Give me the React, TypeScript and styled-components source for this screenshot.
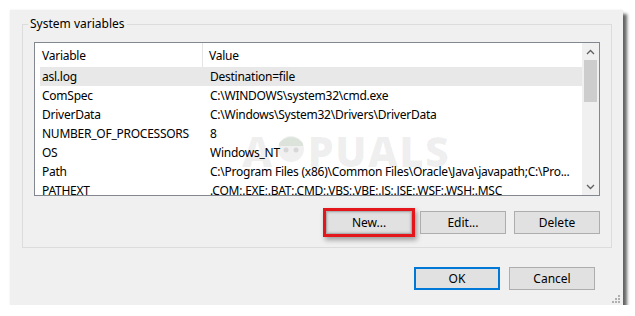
import React from "react";
import styled, { createGlobalStyle } from "styled-components";

const Global = createGlobalStyle`
  html, body { margin: 0; padding: 0; background: #ffffff; }
  body { font-family: "Noto Sans", "Open Sans", sans-serif; font-size: 12px; color: #000; }
  * { box-sizing: border-box; }
`;

const Dialog = styled.div`
  position: relative;
  margin: 10px 0 0 10px;
  width: 613px;
  height: 295px;
  background: #f0f0f0;
  box-shadow: 4px 4px 3px rgba(0, 0, 0, 0.6), 0 0 2px rgba(0, 0, 0, 0.08);
  padding: 7px 11px 0 12px;
  display: flex;
  flex-direction: column;
`;

const Group = styled.fieldset`
  margin: 0;
  min-width: 0;
  border: 1px solid #dcdcdc;
  padding: 11px 11px 13px 11px;
  display: flex;
  flex-direction: column;
`;

const Legend = styled.legend`
  margin-left: -6px;
  padding: 0 2px;
  font-size: 12px;
  line-height: 14px;
  color: #000;
`;

const ListView = styled.div`
  height: 154px;
  border: 1px solid #828790;
  background: #fff;
  display: grid;
  grid-template-columns: 1fr 17px;
  overflow: hidden;
  letter-spacing: -0.25px;
`;

const ListBody = styled.div`
  display: flex;
  flex-direction: column;
  overflow: hidden;
`;

const Header = styled.div`
  display: flex;
  height: 24px;
  flex-shrink: 0;
  align-items: stretch;
`;

const HeaderCell = styled.div<{ $w?: number; $pad: number }>`
  ${(p) => (p.$w ? `width: ${p.$w}px; flex-shrink: 0;` : "flex: 1;")}
  padding-left: ${(p) => p.$pad}px;
  display: flex;
  align-items: center;
  ${(p) => (p.$w ? "border-right: 1px solid #e5e5e5;" : "")}
  white-space: nowrap;
`;

const Row = styled.div<{ $selected?: boolean }>`
  display: flex;
  height: 19px;
  flex-shrink: 0;
  margin-left: 5px;
  align-items: center;
  background: ${(p) => (p.$selected ? "#e8e8e8" : "transparent")};
  white-space: nowrap;
`;

const NameCell = styled.div`
  width: 170px;
  flex-shrink: 0;
  padding-left: 2px;
`;

const ValueCell = styled.div`
  flex: 1;
  overflow: hidden;
`;

const ScrollBar = styled.div`
  background: #f0f0f0;
  display: flex;
  flex-direction: column;
`;

const ScrollButton = styled.div`
  height: 17px;
  display: flex;
  align-items: center;
  justify-content: center;
  flex-shrink: 0;
`;

const Track = styled.div`
  flex: 1;
  padding: 0 2px;
`;

const Thumb = styled.div`
  height: 42px;
  background: #cdcdcd;
`;

const ButtonRow = styled.div<{ $gap: number; $padRight?: number; $top: number }>`
  display: flex;
  justify-content: flex-end;
  gap: ${(p) => p.$gap}px;
  margin-top: ${(p) => p.$top}px;
  padding-right: ${(p) => p.$padRight ?? 0}px;
`;

const Button = styled.button<{ $highlight?: boolean; $default?: boolean }>`
  width: 86px;
  height: 23px;
  margin: 0;
  padding: 0;
  font-family: inherit;
  font-size: 12px;
  color: #000;
  background: #e1e1e1;
  border: ${(p) => (p.$default ? "2px solid #0078d7" : "1px solid #adadad")};
  ${(p) =>
    p.$highlight
      ? "box-shadow: 0 0 0 3px #e3161c, 2px 3px 5px 3px rgba(0,0,0,0.35), inset 0 0 3px rgba(0,0,0,0.25);"
      : ""}
`;

const Watermark = styled.div`
  position: absolute;
  left: 232px;
  top: 112px;
  display: flex;
  align-items: center;
  font-family: "Open Sans", "Noto Sans", sans-serif;
  font-weight: 800;
  font-size: 42px;
  letter-spacing: 1px;
  color: rgba(0, 0, 0, 0.06);
  pointer-events: none;
`;

const Grip = styled.svg`
  position: absolute;
  right: 3px;
  bottom: 2px;
`;

const Chevron = ({ up }: { up?: boolean }) => (
  <svg width="9" height="6" viewBox="0 0 9 6">
    <path
      d={up ? "M1 5 L4.5 1.5 L8 5" : "M1 1 L4.5 4.5 L8 1"}
      fill="none"
      stroke="#606060"
      strokeWidth="1.3"
    />
  </svg>
);

const rows: [string, string][] = [
  ["asl.log", "Destination=file"],
  ["ComSpec", "C:\\WINDOWS\\system32\\cmd.exe"],
  ["DriverData", "C:\\Windows\\System32\\Drivers\\DriverData"],
  ["NUMBER_OF_PROCESSORS", "8"],
  ["OS", "Windows_NT"],
  ["Path", "C:\\Program Files (x86)\\Common Files\\Oracle\\Java\\javapath;C:\\Pro..."],
  ["PATHEXT", ".COM;.EXE;.BAT;.CMD;.VBS;.VBE;.JS;.JSE;.WSF;.WSH;.MSC"],
];

export default function App() {
  return (
    <>
      <Global />
      <Dialog>
        <Group>
          <Legend>System variables</Legend>
          <ListView>
            <ListBody>
              <Header>
                <HeaderCell $w={168} $pad={7}>Variable</HeaderCell>
                <HeaderCell $pad={6}>Value</HeaderCell>
              </Header>
              {rows.map(([n, v], i) => (
                <Row key={n} $selected={i === 0}>
                  <NameCell>{n}</NameCell>
                  <ValueCell>{v}</ValueCell>
                </Row>
              ))}
            </ListBody>
            <ScrollBar>
              <ScrollButton>
                <Chevron up />
              </ScrollButton>
              <Track>
                <Thumb />
              </Track>
              <ScrollButton>
                <Chevron />
              </ScrollButton>
            </ScrollBar>
          </ListView>
          <ButtonRow $gap={8} $top={15}>
            <Button $highlight>New...</Button>
            <Button>Edit...</Button>
            <Button>Delete</Button>
          </ButtonRow>
        </Group>
        <ButtonRow $gap={9} $top={19} $padRight={17}>
          <Button $default>OK</Button>
          <Button>Cancel</Button>
        </ButtonRow>
        <Watermark>
          <span>A</span>
          <svg width="34" height="40" viewBox="0 0 34 40">
            <circle cx="17" cy="18" r="13" fill="rgba(0,0,0,0.06)" />
            <path d="M5 12 Q17 0 29 12 L29 15 L5 15 Z" fill="rgba(40,120,40,0.1)" />
            <circle cx="12" cy="19" r="2.5" fill="rgba(0,0,0,0.1)" />
            <circle cx="22" cy="19" r="2.5" fill="rgba(0,0,0,0.1)" />
          </svg>
          <span>PUALS</span>
        </Watermark>
        <Grip width="8" height="8" viewBox="0 0 8 8">
          <rect x="6" y="0" width="2" height="2" fill="#b0b0b0" />
          <rect x="3" y="3" width="2" height="2" fill="#b0b0b0" />
          <rect x="6" y="3" width="2" height="2" fill="#b0b0b0" />
          <rect x="0" y="6" width="2" height="2" fill="#b0b0b0" />
          <rect x="3" y="6" width="2" height="2" fill="#b0b0b0" />
          <rect x="6" y="6" width="2" height="2" fill="#b0b0b0" />
        </Grip>
      </Dialog>
    </>
  );
}
